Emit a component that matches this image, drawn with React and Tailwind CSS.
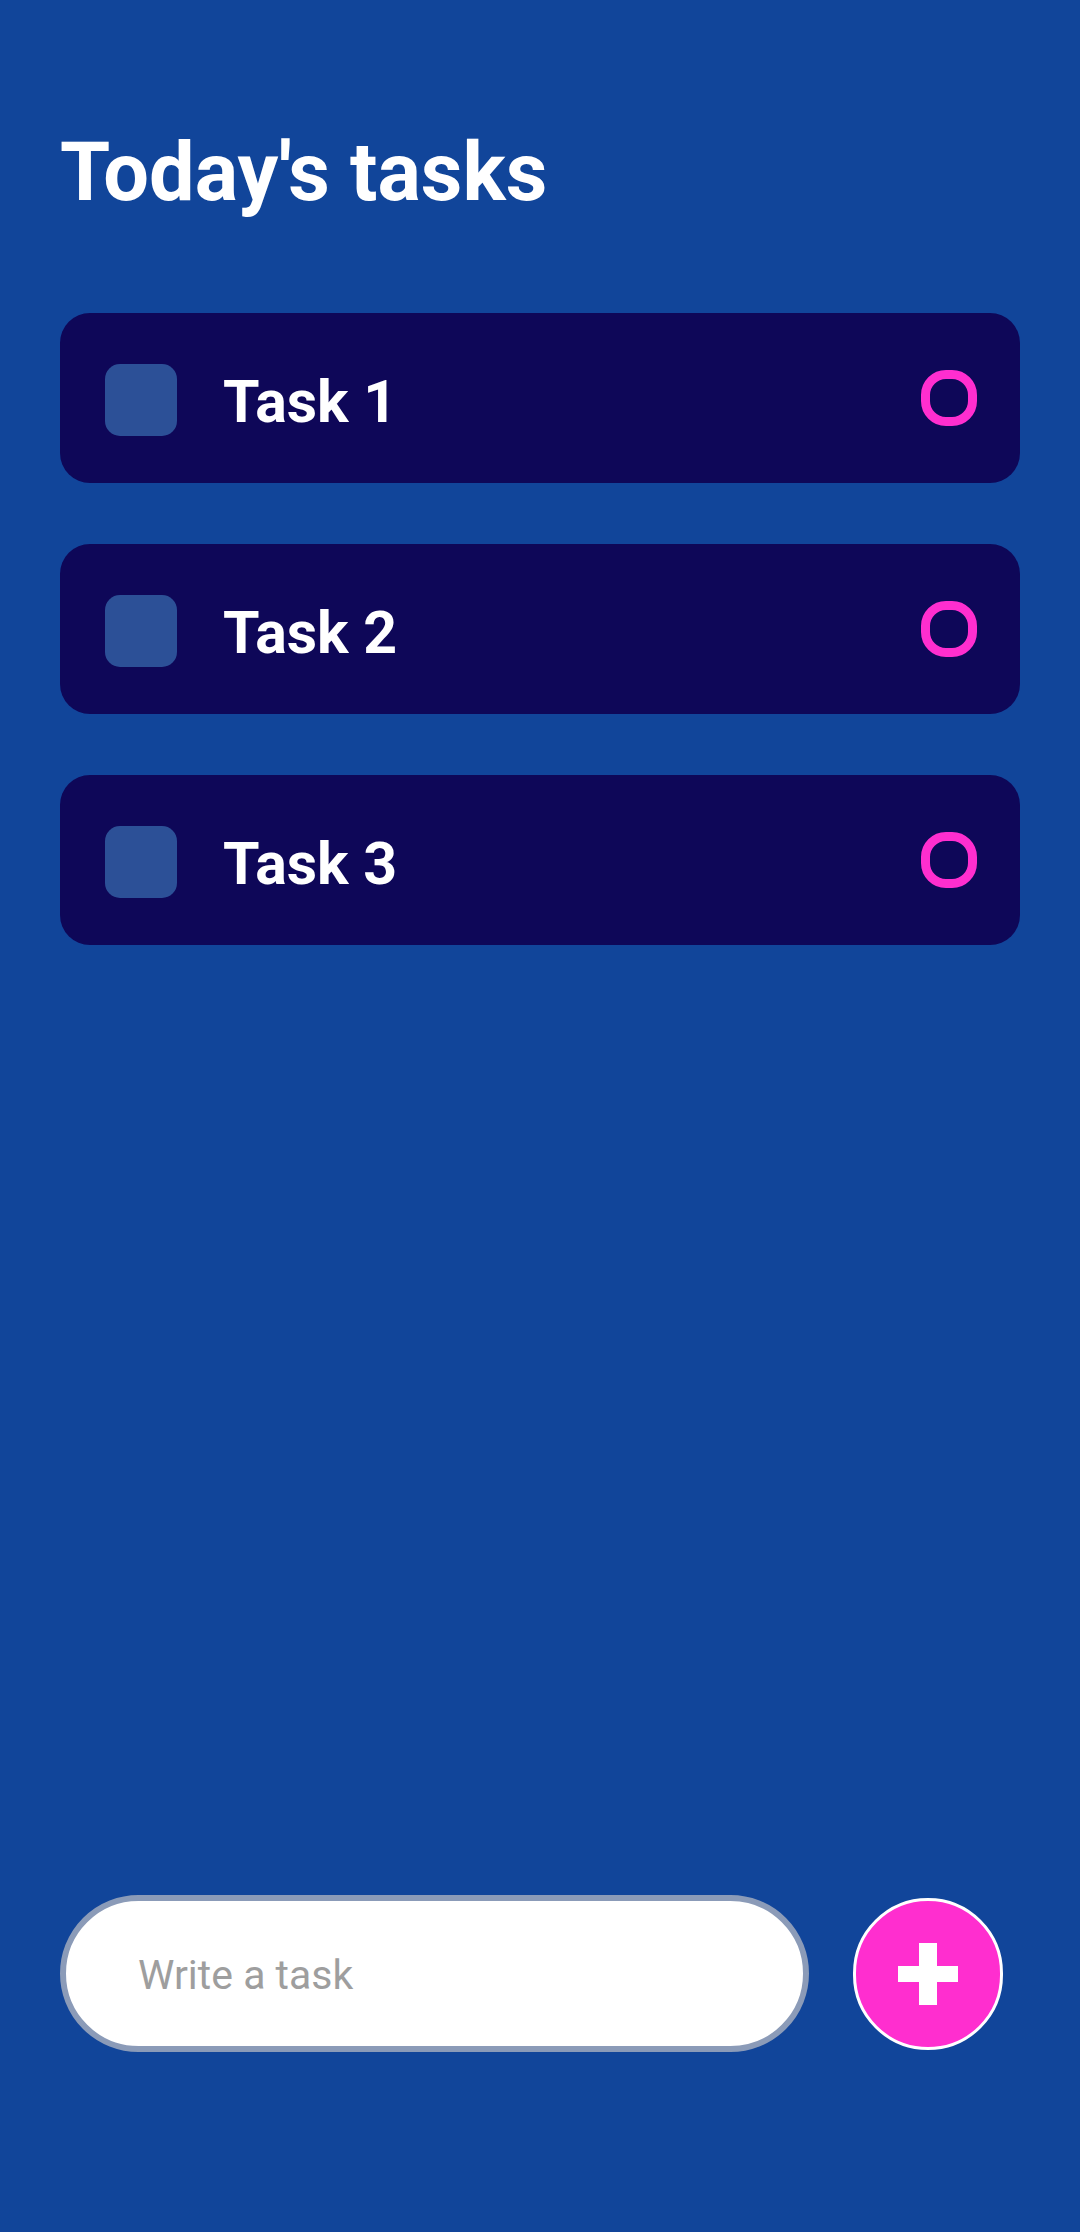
export default function App() {
  const tasks = ["Task 1", "Task 2", "Task 3"]

  return (
    <div className="w-[1080px] h-[2232px] bg-[#11459a] flex flex-col px-[60px] font-['Roboto',sans-serif]">
      <h1 className="mt-[121px] text-[81px] leading-[104px] font-bold text-white">Today's tasks</h1>

      <div className="mt-[88px] flex flex-col gap-[61px]">
        {tasks.map((t) => (
          <div key={t} className="h-[170px] bg-[#0e0758] rounded-[30px] flex items-center pl-[45px] pr-[43px]">
            <div className="mt-[3px] w-[72px] h-[72px] rounded-[15px] bg-[#2c5097]" />
            <span className="ml-[46px] pt-[8px] text-[59px] font-bold text-white">{t}</span>
            <div className="ml-auto w-[56px] h-[56px] rounded-[25px] border-[9px] border-[#ff2ecf]" />
          </div>
        ))}
      </div>

      <div className="mt-auto mb-[180px] flex items-center">
        <div className="w-[749px] h-[157px] rounded-full bg-white border-[6px] border-[#8b9bb8] flex items-center pl-[72px]">
          <span className="pt-[4px] text-[41px] text-[#9e9e9e]">Write a task</span>
        </div>
        <button className="ml-[44px] w-[150px] h-[152px] rounded-full bg-[#ff2ecf] border-[3px] border-white flex items-center justify-center">
          <svg width="60" height="62" viewBox="0 0 60 62">
            <rect x="21" y="0" width="18" height="62" fill="white" />
            <rect x="0" y="23" width="60" height="16" fill="white" />
          </svg>
        </button>
      </div>
    </div>
  )
}
